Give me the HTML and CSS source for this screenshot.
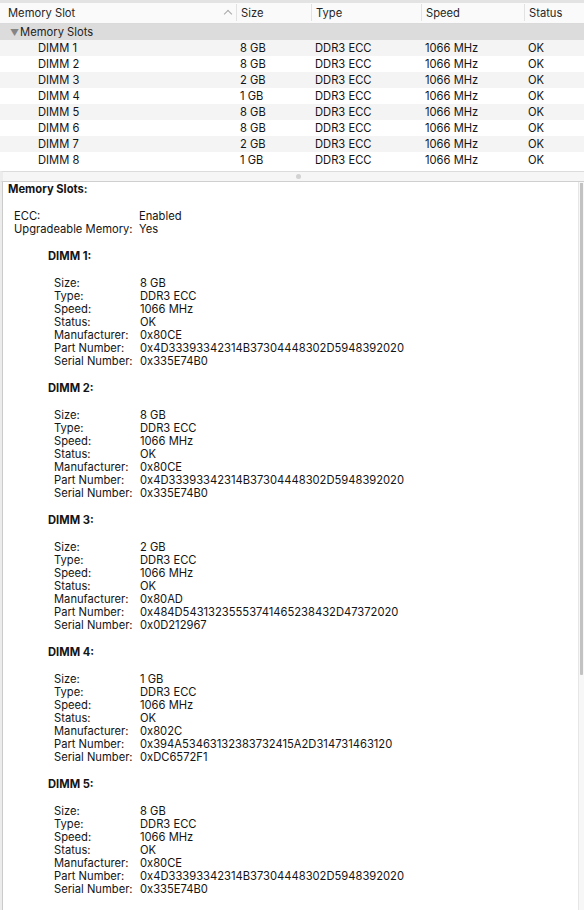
FILE: index.html
```html
<!DOCTYPE html>
<html lang="en">
<head>
  <meta charset="UTF-8">
  <title>System Information - Memory</title>
  <link rel="stylesheet" href="styles.css">
</head>
<body>
  <div class="window">
    <!-- Memory slot list -->
    <div class="slot-table">
      <div class="table-head">
        <div class="head-cell first">Memory Slot <span class="sort-caret"></span></div>
        <div class="head-cell">Size</div>
        <div class="head-cell">Type</div>
        <div class="head-cell">Speed</div>
        <div class="head-cell">Status</div>
      </div>
      <div class="group-row"><span class="disclosure">&#9660;</span>Memory Slots</div>
      <div class="slot-row"><div class="cell first">DIMM 1</div><div class="cell">8 GB</div><div class="cell">DDR3 ECC</div><div class="cell">1066 MHz</div><div class="cell">OK</div></div>
      <div class="slot-row"><div class="cell first">DIMM 2</div><div class="cell">8 GB</div><div class="cell">DDR3 ECC</div><div class="cell">1066 MHz</div><div class="cell">OK</div></div>
      <div class="slot-row"><div class="cell first">DIMM 3</div><div class="cell">2 GB</div><div class="cell">DDR3 ECC</div><div class="cell">1066 MHz</div><div class="cell">OK</div></div>
      <div class="slot-row"><div class="cell first">DIMM 4</div><div class="cell">1 GB</div><div class="cell">DDR3 ECC</div><div class="cell">1066 MHz</div><div class="cell">OK</div></div>
      <div class="slot-row"><div class="cell first">DIMM 5</div><div class="cell">8 GB</div><div class="cell">DDR3 ECC</div><div class="cell">1066 MHz</div><div class="cell">OK</div></div>
      <div class="slot-row"><div class="cell first">DIMM 6</div><div class="cell">8 GB</div><div class="cell">DDR3 ECC</div><div class="cell">1066 MHz</div><div class="cell">OK</div></div>
      <div class="slot-row"><div class="cell first">DIMM 7</div><div class="cell">2 GB</div><div class="cell">DDR3 ECC</div><div class="cell">1066 MHz</div><div class="cell">OK</div></div>
      <div class="slot-row"><div class="cell first">DIMM 8</div><div class="cell">1 GB</div><div class="cell">DDR3 ECC</div><div class="cell">1066 MHz</div><div class="cell">OK</div></div>
    </div>

    <div class="splitter"><span class="grip"></span></div>

    <!-- Detail pane -->
    <div class="detail">
      <div class="detail-body">
        <h2 class="section-title">Memory Slots:</h2>
        <dl class="props top-props">
          <dt>ECC:</dt><dd>Enabled</dd>
          <dt>Upgradeable Memory:</dt><dd>Yes</dd>
        </dl>

        <div class="dimm">
          <h3 class="dimm-title">DIMM 1:</h3>
          <dl class="props">
            <dt>Size:</dt><dd>8 GB</dd>
            <dt>Type:</dt><dd>DDR3 ECC</dd>
            <dt>Speed:</dt><dd>1066 MHz</dd>
            <dt>Status:</dt><dd>OK</dd>
            <dt>Manufacturer:</dt><dd>0x80CE</dd>
            <dt>Part Number:</dt><dd>0x4D33393342314B37304448302D5948392020</dd>
            <dt>Serial Number:</dt><dd>0x335E74B0</dd>
          </dl>
        </div>

        <div class="dimm">
          <h3 class="dimm-title">DIMM 2:</h3>
          <dl class="props">
            <dt>Size:</dt><dd>8 GB</dd>
            <dt>Type:</dt><dd>DDR3 ECC</dd>
            <dt>Speed:</dt><dd>1066 MHz</dd>
            <dt>Status:</dt><dd>OK</dd>
            <dt>Manufacturer:</dt><dd>0x80CE</dd>
            <dt>Part Number:</dt><dd>0x4D33393342314B37304448302D5948392020</dd>
            <dt>Serial Number:</dt><dd>0x335E74B0</dd>
          </dl>
        </div>

        <div class="dimm">
          <h3 class="dimm-title">DIMM 3:</h3>
          <dl class="props">
            <dt>Size:</dt><dd>2 GB</dd>
            <dt>Type:</dt><dd>DDR3 ECC</dd>
            <dt>Speed:</dt><dd>1066 MHz</dd>
            <dt>Status:</dt><dd>OK</dd>
            <dt>Manufacturer:</dt><dd>0x80AD</dd>
            <dt>Part Number:</dt><dd>0x484D54313235553741465238432D47372020</dd>
            <dt>Serial Number:</dt><dd>0x0D212967</dd>
          </dl>
        </div>

        <div class="dimm">
          <h3 class="dimm-title">DIMM 4:</h3>
          <dl class="props">
            <dt>Size:</dt><dd>1 GB</dd>
            <dt>Type:</dt><dd>DDR3 ECC</dd>
            <dt>Speed:</dt><dd>1066 MHz</dd>
            <dt>Status:</dt><dd>OK</dd>
            <dt>Manufacturer:</dt><dd>0x802C</dd>
            <dt>Part Number:</dt><dd>0x394A53463132383732415A2D314731463120</dd>
            <dt>Serial Number:</dt><dd>0xDC6572F1</dd>
          </dl>
        </div>

        <div class="dimm">
          <h3 class="dimm-title">DIMM 5:</h3>
          <dl class="props">
            <dt>Size:</dt><dd>8 GB</dd>
            <dt>Type:</dt><dd>DDR3 ECC</dd>
            <dt>Speed:</dt><dd>1066 MHz</dd>
            <dt>Status:</dt><dd>OK</dd>
            <dt>Manufacturer:</dt><dd>0x80CE</dd>
            <dt>Part Number:</dt><dd>0x4D33393342314B37304448302D5948392020</dd>
            <dt>Serial Number:</dt><dd>0x335E74B0</dd>
          </dl>
        </div>
      </div>
      <div class="scrollbar"><div class="scroll-thumb"></div></div>
    </div>
  </div>
</body>
</html>
```

FILE: styles.css
```css
* {
  box-sizing: border-box;
  margin: 0;
  padding: 0;
}

html, body {
  height: 100%;
}

body {
  font-family: Inter, 'Liberation Sans', sans-serif;
  font-size: 11.2px;
  color: #141414;
  background: #ffffff;
  overflow: hidden;
}

.window {
  display: flex;
  flex-direction: column;
  height: 100%;
}

/* ---- slot table ---- */

.slot-table {
  padding-bottom: 3px;
  background: #ffffff;
}

.table-head,
.slot-row {
  display: grid;
  grid-template-columns: 236px 75px 110px 103px 1fr;
}

.table-head {
  height: 24px;
  border-top: 3px solid #e3e3e3;
  border-bottom: 1px solid #dadada;
  background: #fafafa;
  color: #262626;
}

.head-cell {
  display: flex;
  align-items: center;
  padding-left: 4px;
  border-left: 1px solid #e2e2e2;
  margin: 1px 0 2px;
}

.head-cell.first {
  padding-left: 8px;
  border-left: none;
  justify-content: space-between;
  padding-right: 5px;
}

.sort-caret {
  width: 6px;
  height: 6px;
  border-left: 1px solid #a8a8a8;
  border-top: 1px solid #a8a8a8;
  transform: rotate(45deg);
  margin-top: 3px;
}

.group-row {
  height: 16px;
  line-height: 16px;
  background: #dcdcdc;
  padding-left: 10px;
  color: #222;
}

.disclosure {
  font-size: 9px;
  color: #858585;
  margin-right: 1px;
}

.slot-row {
  height: 16px;
  line-height: 16px;
}

.slot-row:nth-child(odd) {
  background: #f4f4f5;
}

.cell {
  padding-left: 4px;
  white-space: nowrap;
}

.cell.first {
  padding-left: 38px;
}

/* ---- split view divider ---- */

.splitter {
  height: 11px;
  display: flex;
  justify-content: center;
  align-items: center;
  background: #f6f6f6;
  border-top: 1px solid #dcdcdc;
  border-bottom: 1px solid #cfcfcf;
  border-left: 3px solid #ececec;
}

.grip {
  width: 5px;
  height: 5px;
  border-radius: 50%;
  background: #d2d2d2;
  margin-left: 10px;
}

/* ---- detail pane ---- */

.detail {
  flex: 1;
  display: flex;
  min-height: 0;
  background: #ffffff;
  border-left: 2px solid #ececec;
}

.detail-body {
  flex: 1;
  border-left: 1px solid #cbcbcb;
  padding: 1px 0 0 5px;
  line-height: 13px;
}

.section-title {
  font-size: 11.2px;
  font-weight: 700;
  line-height: 13px;
  margin-bottom: 14px;
}

.props {
  display: grid;
  grid-template-columns: 86px 1fr;
  white-space: nowrap;
}

.props dt,
.props dd {
  line-height: 13px;
}

.top-props {
  grid-template-columns: 125px 1fr;
  padding-left: 6px;
  margin-bottom: 14px;
}

.dimm {
  padding-left: 40px;
  margin-bottom: 14px;
}

.dimm-title {
  font-size: 11.2px;
  font-weight: 700;
  line-height: 13px;
  margin-bottom: 14px;
}

.dimm .props {
  padding-left: 6px;
}

.scrollbar {
  width: 6px;
  background: #f7f7f7;
  border-left: 1px solid #e6e6e6;
  padding: 1px 0 0 1px;
}

.scroll-thumb {
  width: 3px;
  height: 492px;
  background: #c2c2c2;
  border-radius: 0 0 1px 1px;
}
```
